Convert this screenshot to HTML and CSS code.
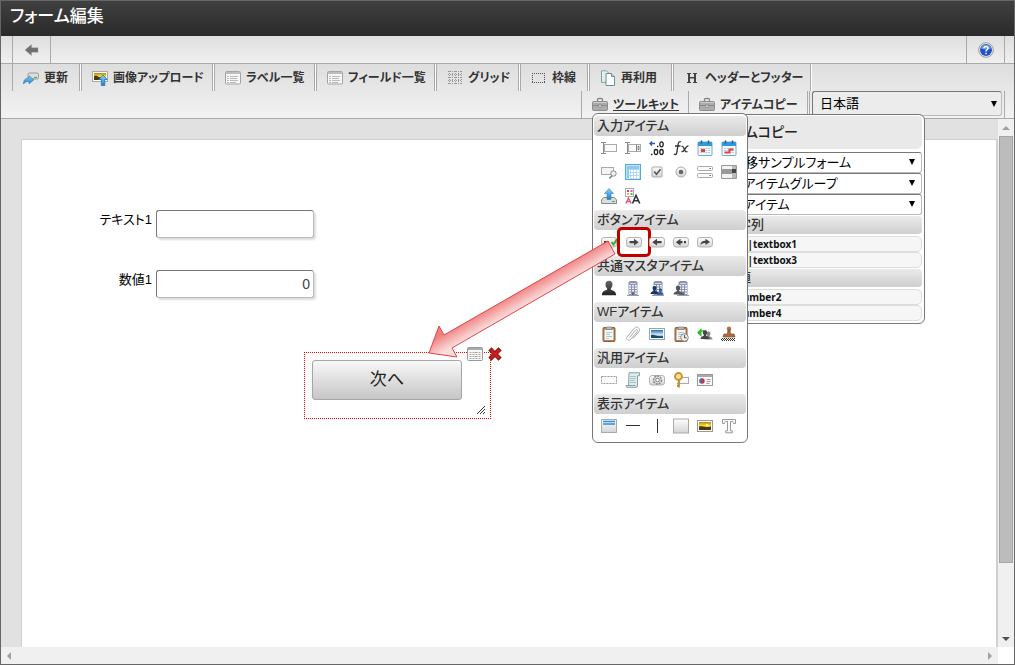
FILE: index.html
```html
<!DOCTYPE html>
<html lang="ja">
<head>
<meta charset="utf-8">
<title>フォーム編集</title>
<link rel="stylesheet" href="styles.css">
</head>
<body>
<svg class="defs" aria-hidden="true">
  <defs>
    <linearGradient id="gLight" x1="0" y1="0" x2="0" y2="1"><stop offset="0" stop-color="#fdfdfd"/><stop offset="1" stop-color="#d4d4d4"/></linearGradient>
    <linearGradient id="gBlue" x1="0" y1="0" x2="0" y2="1"><stop offset="0" stop-color="#8fd0fa"/><stop offset="1" stop-color="#1c7fd0"/></linearGradient>
    <linearGradient id="gDark" x1="0" y1="0" x2="0" y2="1"><stop offset="0" stop-color="#666"/><stop offset="1" stop-color="#222"/></linearGradient>
    <linearGradient id="gGold" x1="0" y1="0" x2="0" y2="1"><stop offset="0" stop-color="#b98a08"/><stop offset="0.5" stop-color="#ffe14a"/><stop offset="1" stop-color="#7c6100"/></linearGradient>
    <linearGradient id="gSky" x1="0" y1="0" x2="0" y2="1"><stop offset="0" stop-color="#2b6bb0"/><stop offset="0.6" stop-color="#d6edf8"/><stop offset="1" stop-color="#164a70"/></linearGradient>
    <symbol id="list" viewBox="0 0 16 16"><rect x=".5" y="1.5" width="15" height="12.500" rx="1" fill="#f6f6f6" stroke="#a4a4a4"/><path d="M1 2h14v2H1z" fill="#bdbdbd"/><path d="M5 6.500h8M5 8.500h7M5 10.500h8M5 12.500h6" stroke="#bbb"/><path d="M2.500 6.500h1M2.500 10.500h1" stroke="#68a"/><path d="M2.500 8.500h1M2.500 12.500h1" stroke="#a77"/></symbol>
    <symbol id="case" viewBox="0 0 16 16"><path d="M5.500 4.500V2.500q0-1 1-1h3q1 0 1 1v2" fill="none" stroke="#888" stroke-width="1.300"/><rect x=".5" y="4.500" width="15" height="9" rx="1" fill="#adadad" stroke="#8e8e8e"/><path d="M1 8.500h14" stroke="#888"/><path d="M1.500 5.500h13" stroke="#ccc"/><rect x="7" y="7.500" width="2" height="3" fill="#e6e6e6" stroke="#888" stroke-width=".7"/></symbol>
    <symbol id="pill" viewBox="0 0 16 16"><rect x=".5" y="3.500" width="15" height="9.500" rx="2.500" fill="url(#gLight)" stroke="#b4b4b4"/></symbol>
    <symbol id="clip" viewBox="0 0 16 16"><rect x="2" y="1.500" width="12" height="14" rx="1" fill="#b87a4c" stroke="#94603a"/><path d="M3.500 3.500h9v10.500h-9z" fill="#f4faf8"/><path d="M5 1h6v2.500H5z" fill="#bbb" stroke="#777" stroke-width=".7"/><path d="M5 6.500h6M5 8.500h4M5 10.500h6M5 12.500h3" stroke="#9bb" stroke-width=".8"/></symbol>
    <symbol id="tower" viewBox="0 0 16 16"><path d="M3.500 15V2.500L5 1h6l1.500 1.500V15z" fill="#8f92ae"/><path d="M5 3h6v1H5z" fill="#d5d7e6"/><path d="M4 5h2v1.500H4zM7 5h2v1.500H7zM10 5h2v1.500h-2zM4 7.500h2V9H4zM7 7.500h2V9H7zM10 7.500h2V9h-2zM4 10h2v1.500H4zM7 10h2v1.500H7zM10 10h2v1.500h-2zM4 12.500h2V14H4zM10 12.500h2V14h-2z" fill="#f0f1fa"/><path d="M7 12.500h2V15H7z" fill="#5e6180"/><path d="M2 15.500h12" stroke="#9a9cad"/></symbol>
    <symbol id="person" viewBox="0 0 16 16"><path d="M8 .8c2.400 0 3.500 1.700 3.500 3.700 0 1.700-.8 3-1.600 3.900v1.400c2.400.8 5.100 1.700 5.300 5.400H.8c.2-3.700 2.900-4.600 5.300-5.400V8.400C5.300 7.500 4.500 6.200 4.500 4.500 4.500 2.500 5.600.8 8 .8z"/></symbol>
    <symbol id="calendar" viewBox="0 0 16 16"><rect x="1" y="2" width="14" height="13.500" rx="1" fill="#f6fbff" stroke="#5a8fb5" stroke-width=".8"/><path d="M1 2h14v4H1z" fill="#2d9be0"/><path d="M4.500.5v3M11.500.5v3" stroke="#245c86" stroke-width="1.500"/><path d="M3 8.500h10M3 10.500h10M3 12.500h10" stroke="#b7c8d5" stroke-width="1.200" stroke-dasharray="2 .7"/></symbol>
  </defs>
</svg>
<div class="window">
  <header class="titlebar"><h1>フォーム編集</h1></header>

  <div class="navbar">
    <button class="nav-button" aria-label="戻る"><svg class="icon" viewBox="0 0 16 16"><path d="M1 8l6.500-5.500v3.300H14v4.400H7.500v3.300z" fill="#6f6f6f" stroke="#999" stroke-width=".4"/></svg></button>
    <button class="nav-button nav-help" aria-label="ヘルプ"><svg class="icon" viewBox="0 0 16 16"><circle cx="8" cy="8" r="7.300" fill="#f4f4f4" stroke="#999"/><circle cx="8" cy="8" r="6" fill="#2254c5"/><path d="M3 6.500a5.200 5.200 0 0 1 10 0q-5 2-10 0z" fill="#6f98e6"/><path d="M6 6.300c.1-2.500 4.100-2.300 4 0 0 1.500-2 1.500-2 3.200M8 10.700v1.500" fill="none" stroke="#fff" stroke-width="1.500"/></svg></button>
  </div>

  <div class="toolbar">
    <div class="tool-row">
      <button class="tool w-s"><svg class="icon" viewBox="0 0 16 16"><rect x="5" y="3" width="10.500" height="6" rx="1.500" fill="#ddd" stroke="#999"/><path d="M11 7.500h3" stroke="#3fc040" stroke-width="1.300"/><path d="M.5 14c0-4 2-6 5.500-6V5.800l5 4-5 4v-2.300C3.500 11.400 2 12 .5 14z" fill="url(#gBlue)" stroke="#287cb8" stroke-width=".6"/></svg>更新</button>
      <button class="tool w-xl"><svg class="icon" viewBox="0 0 16 16"><rect x=".5" y="1.500" width="15" height="10" fill="#fff" stroke="#aaa"/><path d="M2 3h12v7H2z" fill="url(#gGold)"/><path d="M2 6c3-2 4 2 7 1v3H2z" fill="#4b3a08"/><path d="M11 5l4.300 4.500h-2.500v6H9.300v-6H6.800z" fill="url(#gBlue)" stroke="#1873b4" stroke-width=".7"/></svg>画像アップロード</button>
      <button class="tool w-l"><svg class="icon"><use href="#list"/></svg>ラベル一覧</button>
      <button class="tool w-ll"><svg class="icon"><use href="#list"/></svg>フィールド一覧</button>
      <button class="tool w-m"><svg class="icon crisp" viewBox="0 0 16 16"><path d="M2.500 1v14M5.500 1v14M8.500 1v14M11.500 1v14M14.500 1v14M1 1.500h14M1 4.500h14M1 7.500h14M1 10.500h14M1 13.500h14" stroke="#999" stroke-dasharray="1 1"/></svg>グリッド</button>
      <button class="tool w-s"><svg class="icon crisp" viewBox="0 0 16 16"><path d="M1 3.500h13M1 12.500h13M1.500 3v10M13.500 3v10" stroke="#555" stroke-dasharray="1 1"/></svg>枠線</button>
      <button class="tool w-m"><svg class="icon" viewBox="0 0 16 16"><path d="M1.500.8h5l2.500 2.500v9H1.500z" fill="#e3efef" stroke="#83a0a0"/><path d="M6 3.500h5.500l3 3v9H6z" fill="#f7fdfd" stroke="#6f9090"/><path d="M11.500 3.500v3h3" fill="#c8dada" stroke="#6f9090"/></svg>再利用</button>
      <button class="tool w-xxl"><svg class="icon" viewBox="0 0 16 16"><path d="M3 3h4v1H6v3h4V4H9V3h4v1h-1v8h1v1H9v-1h1V8.500H6V12h1v1H3v-1h1V4H3z" fill="#444"/></svg>ヘッダーとフッター</button>
    </div>
    <div class="tool-row tool-row-end">
      <button class="tab tab-active"><svg class="icon"><use href="#case"/></svg><span>ツールキット</span></button>
      <button class="tab tab-copy"><svg class="icon"><use href="#case"/></svg><span>アイテムコピー</span></button>
      <div class="select language"><select aria-label="言語"><option>日本語</option></select></div>
    </div>
  </div>

  <div class="workspace">
    <main class="canvas">
      <div class="paper">
        <div class="field field-text"><label for="text1">テキスト1</label><input id="text1" type="text"></div>
        <div class="field field-number"><label for="number1">数値1</label><input id="number1" type="text" value="0"></div>
        <div class="selection">
          <button class="next">次へ</button>
          <div class="selection-tools">
            <button aria-label="一覧"><svg class="icon" viewBox="0 0 16 16"><rect x=".5" y="1.500" width="15" height="13" rx="1" fill="#f8f8f8" stroke="#999"/><path d="M1 2h14v2H1z" fill="#aaa"/><path d="M2.500 6.500h11M2.500 8.500h11M2.500 10.500h11M2.500 12.500h11" stroke="#aaa" stroke-dasharray="2 1"/><path d="M8 6.500h1M8 10.500h1" stroke="#c90"/></svg></button>
            <button aria-label="削除"><svg class="icon" viewBox="0 0 16 16"><path d="M4.500 4.500l7 7M11.500 4.500l-7 7" stroke="#8b1111" stroke-width="4.500" stroke-linecap="square"/><path d="M4.500 4.500l7 7M11.500 4.500l-7 7" stroke="#c91f1f" stroke-width="2.500" stroke-linecap="square"/></svg></button>
          </div>
          <svg class="grip" viewBox="0 0 8 8"><path d="M0 8l8-8M3 8l5-5M6 8l2-2" stroke="#333"/></svg>
        </div>
      </div>
    </main>
    <div class="scroll-y"><i class="arrow-up"></i><i class="thumb"></i><i class="arrow-down"></i></div>
  </div>
  <div class="scroll-x"><i class="arrow-left"></i><i class="arrow-right"></i></div>

  <section class="copy-panel">
    <h2>アイテムコピー</h2>
    <div class="select"><select aria-label="フォーム"><option>画面遷移サンプルフォーム</option></select></div>
    <div class="select"><select aria-label="グループ"><option>全てのアイテムグループ</option></select></div>
    <div class="select"><select aria-label="アイテム"><option>全てのアイテム</option></select></div>
    <h3>文字列</h3>
    <ul><li>テキスト1|textbox1</li><li>テキスト3|textbox3</li></ul>
    <h3>数値</h3>
    <ul class="numbers"><li>数値1|number2</li><li>数値1|number4</li></ul>
  </section>

  <section class="toolkit">
    <h3>入力アイテム</h3>
    <div class="items">
      <button aria-label="テキスト"><svg class="icon" viewBox="0 0 16 16"><rect x="3.500" y="4.500" width="12" height="7" fill="#fafafa" stroke="#aaa"/><path d="M0 2.500h5M2.500 2.500v11M0 13.500h5" stroke="#888"/></svg></button>
      <button aria-label="数値"><svg class="icon" viewBox="0 0 16 16"><rect x="3.500" y="4.500" width="12" height="7" fill="#fafafa" stroke="#aaa"/><path d="M0 2.500h5M2.500 2.500v11M0 13.500h5M11.500 4.500v7" stroke="#888"/><path d="M12 7.500L13.500 5.500 15 7.500zM12 8.500l1.500 2 1.500-2z" fill="#666"/></svg></button>
      <button aria-label="小数"><svg class="icon" viewBox="0 0 16 16"><path d="M1 3.500h5M3 1.500l-2 2 2 2" fill="none" stroke="#2459b8" stroke-width="1.300"/><path d="M8 6.500h1.400" stroke="#222" stroke-width="1.400"/><ellipse cx="12.500" cy="4.300" rx="1.700" ry="2.500" fill="none" stroke="#222" stroke-width="1.300"/><path d="M2 14.500h1.500" stroke="#222" stroke-width="1.400"/><ellipse cx="7" cy="12" rx="1.700" ry="2.500" fill="none" stroke="#222" stroke-width="1.300"/><ellipse cx="12.500" cy="12" rx="1.700" ry="2.500" fill="none" stroke="#222" stroke-width="1.300"/></svg></button>
      <button aria-label="計算式"><svg class="icon" viewBox="0 0 16 16"><path d="M8 2C4.500 0 5 7 3.800 12.500 3.300 15 2 15 1 14M2 6h5.500M8.500 6.500c3-1.500 2.500 7 6 5M15.500 6c-3-1-4 7-7 5.500" fill="none" stroke="#333" stroke-width="1.300"/></svg></button>
      <button aria-label="日付"><svg class="icon"><use href="#calendar"/><path d="M4 9h4v3H4z" fill="#d44"/></svg></button>
      <button aria-label="期間"><svg class="icon"><use href="#calendar"/><path d="M3.500 12.500h5v-3h4" fill="none" stroke="#d44" stroke-width="2"/></svg></button>
      <button aria-label="検索"><svg class="icon" viewBox="0 0 16 16"><rect x=".5" y="3.500" width="12" height="7" fill="#f4f4f4" stroke="#aaa"/><path d="M11 11.500L8.500 14.500" stroke="#888" stroke-width="1.800"/><circle cx="12.500" cy="9.500" r="2.700" fill="#eef6fb" stroke="#888"/></svg></button>
      <button aria-label="テーブル"><svg class="icon" viewBox="0 0 16 16"><rect x=".5" y=".5" width="15" height="15" fill="#bfe4fb" stroke="#52a8df"/><path d="M2 2h12v12H2z" fill="#fff"/><path d="M2 2h12v3H2zM2 2h2v12H2z" fill="#84c9f2"/><path d="M2 5.500h12M2 8.500h12M2 11.500h12M5.500 2v12M8.500 2v12M11.500 2v12" stroke="#9bcdec" stroke-width=".7"/></svg></button>
      <button aria-label="チェックボックス"><svg class="icon" viewBox="0 0 16 16"><rect x="3" y="3" width="10" height="10" rx="1" fill="url(#gLight)" stroke="#aaa"/><path d="M5.200 7.500l2.300 2.700 4-5" fill="none" stroke="#555" stroke-width="1.600"/></svg></button>
      <button aria-label="ラジオボタン"><svg class="icon" viewBox="0 0 16 16"><circle cx="8" cy="8" r="5" fill="url(#gLight)" stroke="#aaa"/><circle cx="8" cy="8" r="2.300" fill="#666"/></svg></button>
      <button aria-label="セレクト"><svg class="icon" viewBox="0 0 16 16"><rect x=".5" y="2.500" width="15" height="4" rx="1" fill="#fafafa" stroke="#aaa"/><rect x=".5" y="9.500" width="15" height="4" rx="1" fill="#fafafa" stroke="#aaa"/><path d="M12.500 4.500h1.500M12.500 11.500h1.500" stroke="#666"/></svg></button>
      <button aria-label="リスト"><svg class="icon" viewBox="0 0 16 16"><path d="M.5 1.500h15v4H.5zM.5 5.500h15v4H.5zM.5 9.500h15v5H.5z" fill="#f2f2f2" stroke="#999"/><path d="M1 6h10v3H1z" fill="#999"/><path d="M11 2h4v12h-4z" fill="#bbb"/><path d="M11 5h4v4h-4z" fill="#444"/></svg></button>
      <button aria-label="添付"><svg class="icon" viewBox="0 0 16 16"><path d="M2.500 9.500h11l2 2.500v3.500H.5V12z" fill="#ddd" stroke="#888"/><path d="M11 13.500h3" stroke="#49b749"/><path d="M8 .5l4.500 5H10v6H6v-6H3.500z" fill="url(#gBlue)" stroke="#2b82bd" stroke-width=".6"/></svg></button>
      <button aria-label="書式"><svg class="icon" viewBox="0 0 16 16"><rect x=".5" y=".5" width="8" height="8" fill="#fff" stroke="#aaa"/><path d="M2 2h2v2H2z" fill="#d44"/><path d="M5.500 2h2v2h-2z" fill="#c5f"/><path d="M2 5h2v2H2z" fill="#fa3"/><path d="M5.500 5h2v2h-2z" fill="#5b4"/><path d="M.8 15.500L3.500 10l2.700 5.500M2 13.500h3" fill="none" stroke="#e05577" stroke-width="1.300"/><path d="M7.500 15.500L11 7.500l3.800 8M9 12.700h4.500" fill="none" stroke="#333" stroke-width="1.600"/></svg></button>
    </div>
    <h3>ボタンアイテム</h3>
    <div class="items">
      <button aria-label="登録"><svg class="icon"><use href="#pill"/><path d="M3 8h5" stroke="#444" stroke-width="2"/><path d="M10.500 8l2 2.500L16 5" fill="none" stroke="#33a82c" stroke-width="1.800"/></svg></button>
      <button aria-label="次へ" class="marked"><svg class="icon"><use href="#pill"/><path d="M3.500 7H8V4.800l4.700 3.400L8 11.600V9.300H3.500z" fill="#444"/></svg></button>
      <button aria-label="戻る"><svg class="icon"><use href="#pill"/><path d="M12.500 7H8V4.800L3.300 8.200 8 11.600V9.300h4.500z" fill="#444"/></svg></button>
      <button aria-label="前へ"><svg class="icon"><use href="#pill"/><path d="M9.500 7H7.500V4.800L2.800 8.200l4.700 3.400V9.300h2zM11 7h2v2.300h-2z" fill="#444"/></svg></button>
      <button aria-label="進む"><svg class="icon"><use href="#pill"/><path d="M3.500 11c.2-3 2-4.300 5-4.300V4.800L13 8l-4.500 3V9c-2.500 0-3.500.4-5 2z" fill="#444"/></svg></button>
    </div>
    <h3>共通マスタアイテム</h3>
    <div class="items">
      <button aria-label="ユーザー"><svg class="icon" fill="url(#gDark)"><use href="#person"/></svg></button>
      <button aria-label="会社"><svg class="icon"><use href="#tower"/></svg></button>
      <button aria-label="所属"><svg class="icon"><use href="#tower" x="1"/><use href="#person" x="1" y="4" width="9" height="12" fill="#173764"/><use href="#person" x="8" y="7" width="7" height="9" fill="#345d92"/></svg></button>
      <button aria-label="組織"><svg class="icon"><use href="#tower" x="2"/><use href="#person" x="0" y="4" width="10" height="12" fill="#555"/></svg></button>
    </div>
    <h3>WFアイテム</h3>
    <div class="items">
      <button aria-label="申請書"><svg class="icon"><use href="#clip"/></svg></button>
      <button aria-label="クリップ"><svg class="icon" viewBox="0 0 16 16"><path d="M4.500 11.500l6-7.500c1-1 2.700.2 1.800 1.500l-6.800 8c-2 2-5-.2-3.500-2.500l7.500-9c2.500-2.500 6.500.5 4.500 3.500l-6 7" fill="none" stroke="#aaa"/></svg></button>
      <button aria-label="画像"><svg class="icon" viewBox="0 0 16 16"><rect x=".5" y="2.500" width="15" height="11" fill="#fff" stroke="#8ab"/><path d="M2 4h12v8H2z" fill="url(#gSky)"/><path d="M2 9c4-1 5 2 12 1v2H2z" fill="#174e6c"/></svg></button>
      <button aria-label="履歴"><svg class="icon"><use href="#clip"/><circle cx="11.500" cy="11.500" r="3.800" fill="#eee" stroke="#888"/><path d="M11.500 9v2.800h2" fill="none" stroke="#555"/></svg></button>
      <button aria-label="承認者"><svg class="icon"><use href="#person" x="7" y="3" width="9" height="13" fill="#888"/><use href="#person" x="3" y="2" width="10" height="13" fill="#444"/><path d="M0 6.500L4.500 2v2.500c3-1.500 4.500-.5 5 1-2-.8-3.500-.4-5 .8V11z" fill="#35b82d"/></svg></button>
      <button aria-label="スタンプ"><svg class="icon" viewBox="0 0 16 16"><circle cx="8" cy="2.700" r="2.200" fill="#b76c42"/><path d="M7 4h2l.5 4h3.500l1 3H2l1-3h3.500z" fill="#b06a44" stroke="#8a4d2c" stroke-width=".7"/><path d="M1 12.500h14M0 13.500h14M1 14.500h14" stroke="#333" stroke-dasharray="1 1"/></svg></button>
    </div>
    <h3>汎用アイテム</h3>
    <div class="items">
      <button aria-label="枠"><svg class="icon" viewBox="0 0 16 16"><rect x=".5" y="4.500" width="15" height="7" fill="#fafafa" stroke="#999" stroke-dasharray="2 1"/></svg></button>
      <button aria-label="スクリプト"><svg class="icon" viewBox="0 0 16 16"><path d="M4 .8h10.500v3H12.500v10q0 1.500-1.500 1.500H2q-1 0-1-1.800h2.500z" fill="#e0eded" stroke="#84a2a2"/><path d="M5 4.500h6M5 6.500h6M5 8.500h5M5 10.500h6" stroke="#a5c3c3"/><path d="M1 13.500h9.500" stroke="#84a2a2"/></svg></button>
      <button aria-label="設定"><svg class="icon"><use href="#pill"/><circle cx="8.500" cy="8" r="4" fill="#ddd" stroke="#888" stroke-width="1.500" stroke-dasharray="2 1"/><circle cx="8.500" cy="8" r="1.800" fill="#fff" stroke="#888"/></svg></button>
      <button aria-label="キー"><svg class="icon" viewBox="0 0 16 16"><rect x="5.500" y="5.500" width="10" height="6" fill="#fafafa" stroke="#aaa"/><circle cx="5.500" cy="4.500" r="3.500" fill="#ffe28a" stroke="#c39232" stroke-width="1.800"/><path d="M6 7.500v8M6 11.500H4M6 14H4" stroke="#c39232" stroke-width="1.900"/></svg></button>
      <button aria-label="レポート"><svg class="icon" viewBox="0 0 16 16"><rect x=".5" y="2.500" width="15" height="11" fill="#fafafa" stroke="#999"/><path d="M1 3h14v2H1z" fill="#aaa"/><circle cx="5" cy="9" r="2.700" fill="#c33"/><path d="M5 9V6.300A2.700 2.700 0 0 0 4 11.500z" fill="#3a76c8"/><path d="M9.500 7.500h4M9.500 9.500h4M9.500 11.500h3" stroke="#999"/></svg></button>
    </div>
    <h3>表示アイテム</h3>
    <div class="items">
      <button aria-label="パネル"><svg class="icon" viewBox="0 0 16 16"><rect x=".5" y="1.500" width="15" height="13" fill="url(#gLight)" stroke="#aaa"/><path d="M2 3.500h12M2 6h12" stroke="#2d8ddc" stroke-width="1.600"/></svg></button>
      <button aria-label="横線"><svg class="icon" viewBox="0 0 16 16"><path d="M1 7.500h14" stroke="#333"/></svg></button>
      <button aria-label="縦線"><svg class="icon" viewBox="0 0 16 16"><path d="M8.500 1v14" stroke="#333"/></svg></button>
      <button aria-label="四角"><svg class="icon" viewBox="0 0 16 16"><rect x=".5" y="1" width="15" height="14" fill="url(#gLight)" stroke="#aaa"/></svg></button>
      <button aria-label="イメージ"><svg class="icon" viewBox="0 0 16 16"><rect x=".5" y="2.500" width="15" height="11" fill="#fff" stroke="#999"/><path d="M2 4h12v8H2z" fill="url(#gGold)"/><path d="M2 8.500c3-1 5 1.500 12 0V12H2z" fill="#4b3a08"/><circle cx="10" cy="7" r="1.200" fill="#fff7b0"/></svg></button>
      <button aria-label="文字"><svg class="icon" viewBox="0 0 16 16"><path d="M1.500 1.500h13v4h-2c0-1.200-.4-2-1.300-2H9.500v9.300h1.800v2H4.700v-2h1.800V3.500H4.800c-.9 0-1.300.8-1.300 2h-2z" fill="#fafafa" stroke="#999"/></svg></button>
    </div>
  </section>

  <svg class="pointer" viewBox="0 0 190 120" aria-hidden="true">
    <defs><linearGradient id="gRed" gradientUnits="userSpaceOnUse" x1="95" y1="49" x2="103" y2="63"><stop offset="0" stop-color="#f08080"/><stop offset="1" stop-color="#fbdcdc"/></linearGradient></defs>
    <path d="M180 2L16 96l-5-9L1 114l28 4-5-9L187 15z" fill="url(#gRed)" stroke="#e24444"/>
  </svg>
</div>
</body>
</html>
```
FILE: styles.css
```css
* { box-sizing: border-box; }
body {
  margin: 0;
  font: 12px/16px "Liberation Sans", "Noto Sans CJK JP", sans-serif;
  font-feature-settings: "palt";
  color: #222;
}
h1, h2, h3, ul { margin: 0; padding: 0; }
button, input, select { font: inherit; font-feature-settings: inherit; color: inherit; margin: 0; }
button { padding: 0; border: 0; background: none; }
.defs { position: absolute; width: 0; height: 0; }
.icon { display: block; width: 16px; height: 16px; flex: none; }
.crisp { shape-rendering: crispEdges; }

.window {
  position: relative;
  display: flex;
  flex-direction: column;
  height: 100vh;
  border: 1px solid #666;
  background: #e1e1e1;
}
.titlebar {
  padding: 5px 9px 8px;
  background: linear-gradient(#404040, #2a2a2a);
  color: #fff;
}
.titlebar h1 { font-size: 17px; line-height: 22px; font-weight: 500; }

.navbar {
  display: flex;
  padding: 0 9px 0 11px;
  border-bottom: 1px solid #aaa;
  background: linear-gradient(#dedede, #f0f0f0);
}
.nav-button {
  display: flex;
  align-items: center;
  justify-content: center;
  width: 39px;
  height: 27px;
  border: solid #aaa;
  border-width: 0 1px;
}
.nav-help { margin-left: auto; }

.toolbar {
  border-bottom: 1px solid #aaa;
  background: linear-gradient(#dedede, #f2f2f2);
}
.tool-row { display: flex; height: 27px; padding-left: 11px; gap: 1px; }
.tool {
  display: flex;
  align-items: center;
  gap: 5px;
  padding-left: 10px;
  border: solid #aaa;
  border-width: 0 1px;
  box-shadow: 1px 0 #fff;
  font-weight: bold;
  white-space: nowrap;
  color: #333;
}
.w-s { width: 68px; }
.w-m { width: 83px; }
.w-l { width: 101px; }
.w-ll { width: 119px; }
.w-xl { width: 132px; }
.w-xxl { width: 138px; }
.tool-row-end { justify-content: flex-end; padding-right: 9px; gap: 0; }
.tab {
  display: flex;
  align-items: center;
  gap: 5px;
  width: 107px;
  padding-left: 10px;
  border-left: 1px solid #aaa;
  font-weight: bold;
  white-space: nowrap;
  color: #333;
}
.tab-active { text-decoration: underline; }
.tab-copy { width: 122px; border-right: 3px double #aaa; }

.select { position: relative; }
.select select {
  display: block;
  width: 100%;
  height: 21px;
  padding: 0 20px 0 16px;
  appearance: none;
  border: 1px solid #bbb;
  border-top-color: #777;
  border-left-color: #777;
  border-radius: 3px;
  background: #fff;
  font-size: 13px;
  color: #000;
}
.select::after {
  content: "";
  position: absolute;
  right: 7px;
  top: 50%;
  margin-top: -4px;
  border: solid transparent;
  border-width: 6px 3px 0;
  border-top-color: #000;
}
.language { width: 195px; padding: 0 2px; border-right: 1px solid #aaa; }
.language select { height: 25px; padding-left: 7px; background: #ececec; }

.workspace { display: flex; flex: 1; min-height: 0; }
.canvas { display: flex; flex: 1; padding: 20px 0 0 20px; }
.paper {
  position: relative;
  flex: 1;
  border: 1px solid #d0d0d0;
  border-width: 1px 2px 0 1px;
  background: #fff;
}
.field {
  position: absolute;
  left: 70px;
  display: flex;
  justify-content: flex-end;
  gap: 4px;
  width: 222px;
}
.field-text { top: 70px; }
.field-number { top: 130px; }
.field label { padding-top: 2px; font-size: 13px; color: #000; }
.field input {
  width: 158px;
  height: 28px;
  padding: 0 3px;
  border: 1px solid #bbb;
  border-top-color: #777;
  border-left-color: #777;
  border-radius: 3px;
  box-shadow: 2px 2px 2px #ddd;
  background: #fff;
  font-size: 14px;
  text-align: right;
  color: #444;
}
.selection {
  position: absolute;
  left: 282px;
  top: 212px;
  width: 187px;
  height: 67px;
  padding: 7px;
  border: 1px dotted #ff0000;
}
.next {
  width: 150px;
  height: 40px;
  border: 1px solid #a6a6a6;
  border-radius: 3px;
  background: linear-gradient(#f8f8f8, #c6c6c6);
  font-size: 17px;
}
.selection-tools { position: absolute; right: -13px; top: -7px; display: flex; gap: 4px; }
.grip { position: absolute; right: 5px; bottom: 4px; width: 8px; height: 8px; }

.scroll-y {
  display: flex;
  flex-direction: column;
  align-items: center;
  width: 16px;
  padding: 7px 1px 6px;
  background: #f0f0f0;
}
.scroll-y i, .scroll-x i { border: 4px solid transparent; }
.scroll-y .arrow-up { border-width: 0 4px 4px; border-bottom-color: #a0a0a0; }
.scroll-y .thumb { flex: 0 1 83%; width: 100%; margin: 6px 0 auto; border: 1px solid #a6a6a6; background: #bcbcbc; }
.scroll-y .arrow-down { border-width: 4px 4px 0; border-top-color: #505050; }
.scroll-x {
  display: flex;
  align-items: center;
  justify-content: space-between;
  height: 17px;
  padding: 0 22px 0 6px;
  background: linear-gradient(#fff, #fff) right / 16px 100% no-repeat #f0f0f0;
}
.scroll-x .arrow-left { border-width: 4px 4px 4px 0; border-right-color: #a0a0a0; }
.scroll-x .arrow-right { border-width: 4px 0 4px 4px; border-left-color: #a0a0a0; }

/* Drop-down panels lie over the workspace */
.toolkit, .copy-panel {
  position: absolute;
  border: 1px solid #777;
  border-radius: 6px;
  background: #fff;
}
.toolkit h3, .copy-panel h3 {
  height: 20px;
  padding-left: 3px;
  border-radius: 4px;
  background: linear-gradient(#eaeaea, #cfcfcf);
  font-size: 13px;
  line-height: 20px;
  font-weight: 500;
  color: #333;
}
.toolkit { right: 266px; top: 112px; width: 156px; padding: 2px 1px; }
.items {
  display: grid;
  grid-template-columns: repeat(6, 24px);
  grid-auto-rows: 24px;
  margin: 0 0 2px 3px;
}
.items button { display: grid; place-items: center; }
.items .marked { margin: -3px -6px -3px -4px; border: 3px solid #c00000; border-radius: 5px; }
.copy-panel { right: 89px; top: 113px; width: 239px; padding: 1px 2px 2px; }
.copy-panel h2 {
  margin-bottom: 3px;
  padding-left: 19px;
  border-radius: 5px;
  background: #e9e9e9;
  font-size: 14px;
  line-height: 33px;
  font-weight: 500;
}
.copy-panel h3 { height: 18px; line-height: 18px; margin-top: 1px; padding-left: 36px; }
.copy-panel ul { padding-top: 2px; list-style: none; }
.copy-panel li {
  height: 16px;
  padding-left: 12px;
  border: 1px solid #ddd;
  border-radius: 5px;
  background: #f6f6f6;
  font: bold 10px/14px "Noto Sans", "Noto Sans CJK JP", sans-serif;
  color: #111;
}
.copy-panel .numbers li { padding-left: 15px; }
.pointer { position: absolute; right: 396px; top: 238px; width: 190px; height: 120px; }
```
